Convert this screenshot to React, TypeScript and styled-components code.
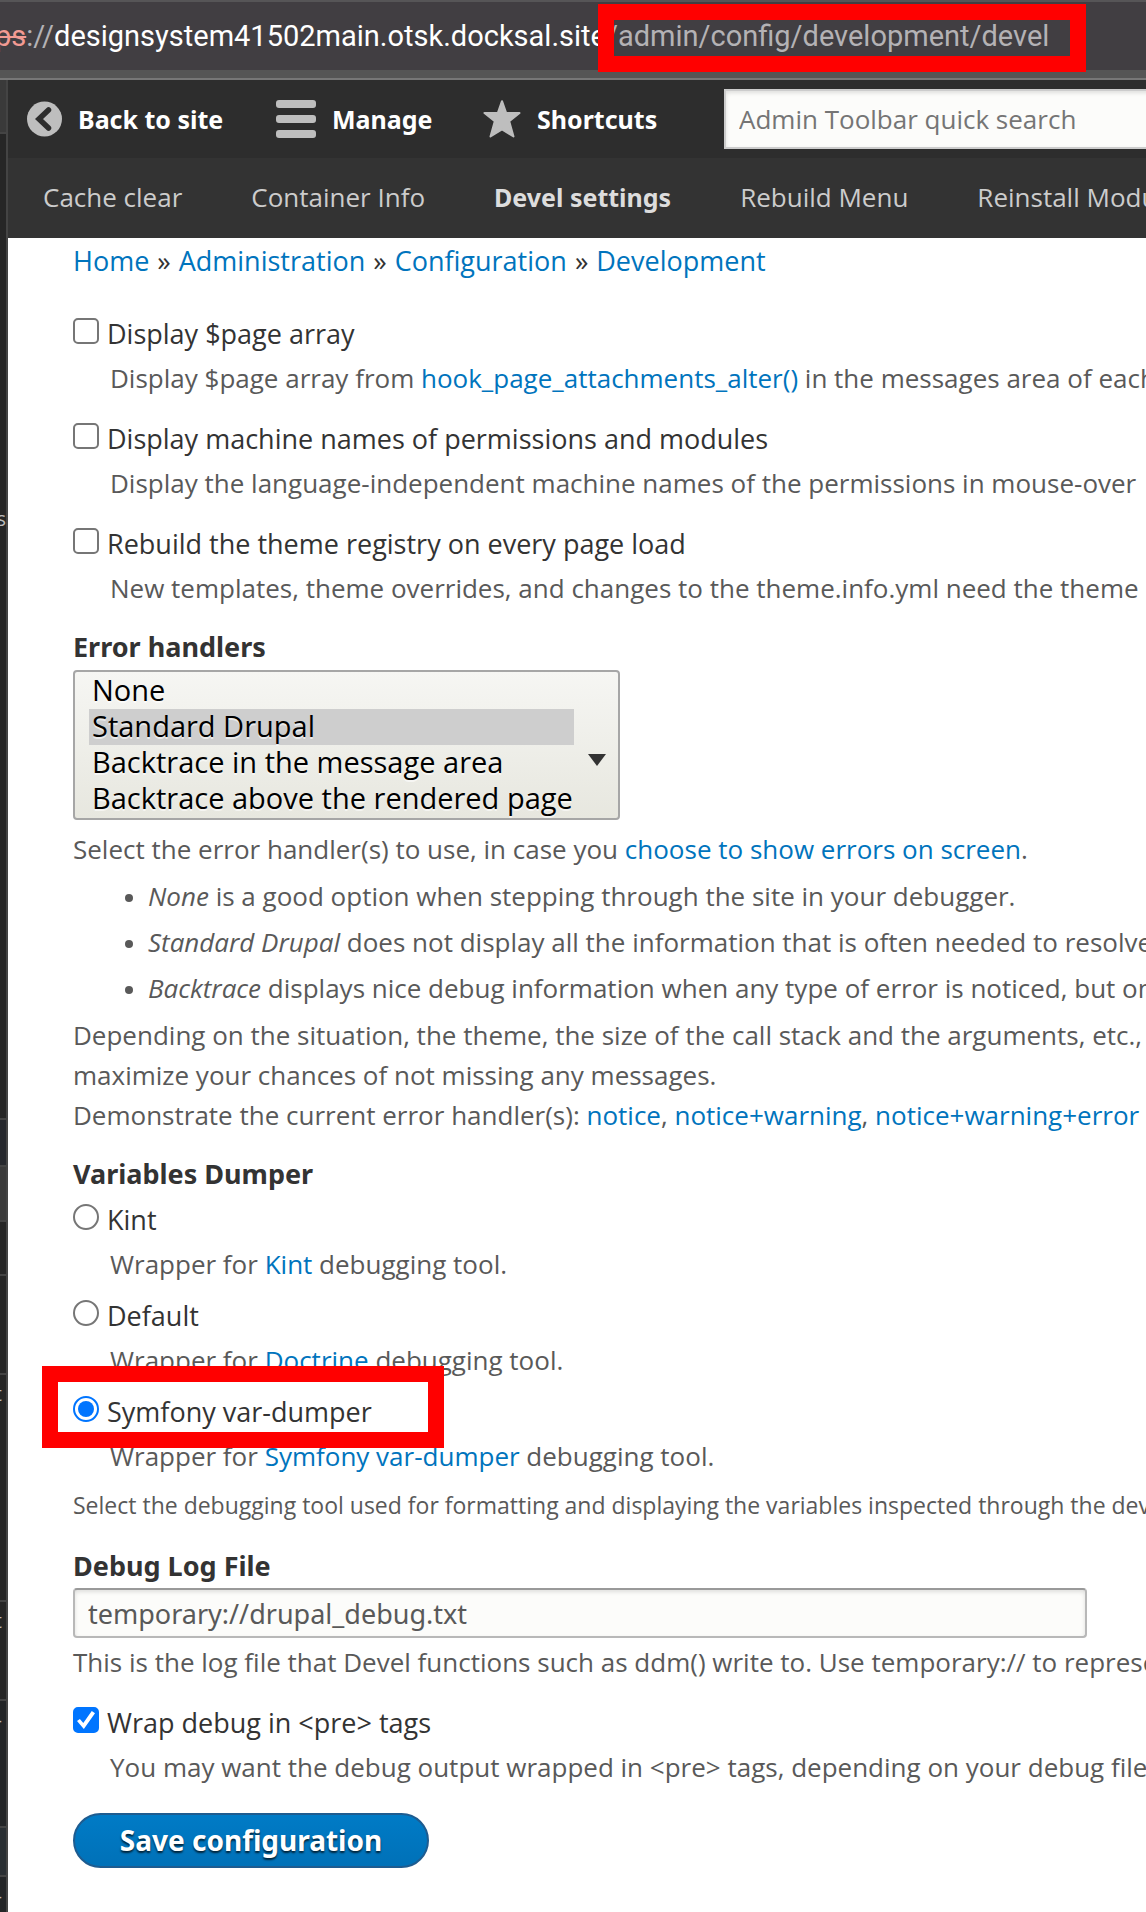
import React from "react";
import styled, { createGlobalStyle } from "styled-components";

const GlobalStyle = createGlobalStyle`
  *, *::before, *::after { box-sizing: border-box; }
  body {
    margin: 0;
    background: #fff;
    color: #333;
    font: 27px/40px "Open Sans", "Noto Sans", sans-serif;
    overflow-x: hidden;
  }
`;

const Page = styled.div`
  min-height: 100vh;
  display: flex;
  flex-direction: column;
  overflow: hidden;
`;

/* Browser address bar */
const AddressBar = styled.header`
  height: 80px;
  background: #413e42;
  border-top: 2px solid #565557;
  border-bottom: 2px solid #777;
  box-shadow: inset 0 -8px #555;
  padding: 15px 0 0;
  overflow: hidden;
`;

const Url = styled.div`
  margin-left: -5px;
  font: 29px/38px Roboto, "Liberation Sans", sans-serif;
  color: #b4b2b5;
  white-space: nowrap;
`;

const Scheme = styled.s`
  color: #f29a93;
`;

const Host = styled.span`
  color: #fff;
`;

const Path = styled.span`
  position: relative;
`;

const Highlight = styled.span<{ $x: number; $y: number; $w: number; $h: number }>`
  position: absolute;
  left: ${(p) => p.$x}px;
  top: ${(p) => p.$y}px;
  width: ${(p) => p.$w}px;
  height: ${(p) => p.$h}px;
  border: 16px solid #f00;
  pointer-events: none;
`;

const Body = styled.div`
  flex: 1;
  display: flex;
  min-width: 0;
`;

/* Edge of the neighbouring window */
const Edge = styled.aside`
  flex: 0 0 8px;
  border-right: 2px solid #444;
  background: #262626;
  overflow: hidden;
`;

const EdgeCell = styled.div<{ $h: number; $bg?: string }>`
  height: ${(p) => p.$h}px;
  background: ${(p) => p.$bg ?? "#262626"};
  border-bottom: 2px solid #444;
  color: #bbb;
  font-size: 20px;
  line-height: 38px;
  overflow: hidden;
  display: flex;
  justify-content: flex-end;
`;

const EdgeMark = styled.span<{ $top?: number }>`
  padding-top: ${(p) => p.$top ?? 0}px;
  padding-right: ${(p) => (p.$top ? 0 : 4)}px;
`;

const Main = styled.main`
  flex: 1;
  min-width: 0;
  overflow: hidden;
`;

/* Admin toolbar */
const Toolbar = styled.nav`
  height: 78px;
  background: #2d2d2d;
  display: flex;
  align-items: center;
  overflow: hidden;
`;

const Tab = styled.a<{ $w: number }>`
  flex: 0 0 ${(p) => p.$w}px;
  display: flex;
  align-items: center;
  gap: 16px;
  padding-left: 19px;
  color: #fff;
  font: 700 25px/40px "Noto Sans", sans-serif;
  text-decoration: none;
  white-space: nowrap;

  svg { flex: none; fill: #bebebe; }
`;

const Search = styled.input`
  flex: 1 0 460px;
  height: 60px;
  border: 2px solid #ccc;
  border-radius: 0;
  padding: 0 13px;
  background: #fcfcfa;
  box-shadow: inset 0 2px 4px rgba(0, 0, 0, 0.12);
  color: #333;
  font: 26px "Open Sans", sans-serif;
  &::placeholder { color: #757575; opacity: 1; }
`;

const Tray = styled.nav`
  height: 80px;
  background: #333;
  display: flex;
  align-items: center;
  gap: 69px;
  padding: 0 0 2px 35px;
  overflow: hidden;
`;

const TrayLink = styled.a<{ $active?: boolean }>`
  flex: none;
  color: ${(p) => (p.$active ? "#ddd" : "#ccc")};
  font-family: ${(p) => (p.$active ? '"Noto Sans"' : '"Open Sans"')}, sans-serif;
  font-size: ${(p) => (p.$active ? 25 : 26)}px;
  font-weight: ${(p) => (p.$active ? 700 : 400)};
  text-decoration: none;
  white-space: nowrap;
`;

/* Page content */
const Content = styled.div`
  padding: 0 0 40px 65px;
`;

const Breadcrumb = styled.nav`
  display: flex;
  gap: 8px;
  line-height: 46px;
  white-space: nowrap;
`;

const Link = styled.a`
  color: #0074bd;
  text-decoration: none;
`;

const Form = styled.form`
  margin-top: 30px;
`;

const Group = styled.div<{ $gap: number; $top?: number }>`
  display: flex;
  flex-direction: column;
  gap: ${(p) => p.$gap}px;
  margin-top: ${(p) => p.$top ?? 0}px;
`;

const Choice = styled.div`
  position: relative;
  display: flex;
  gap: 8px;
  white-space: nowrap;
`;

const Box = styled.input`
  appearance: none;
  flex: none;
  width: 26px;
  height: 26px;
  margin: 4px 0 0;
  border: 2px solid #767676;
  border-radius: ${(p) => (p.type === "radio" ? "50%" : "5px")};
  background: #fff;
  display: grid;
  place-items: center;

  &[type="radio"]:checked { border-color: #0075ff; }
  &[type="radio"]:checked::before {
    content: "";
    width: 16px;
    height: 16px;
    border-radius: 50%;
    background: #0075ff;
  }
  &[type="checkbox"]:checked { border-color: #0075ff; background: #0075ff; }
  &[type="checkbox"]:checked::before {
    content: "";
    width: 18px;
    height: 18px;
    background: #fff;
    clip-path: polygon(0 56%, 16% 44%, 35% 66%, 82% 0, 100% 12%, 38% 100%);
  }
`;

const Description = styled.div<{ $indent?: boolean; $top?: number; $small?: boolean }>`
  margin-top: ${(p) => p.$top ?? 4}px;
  padding-left: ${(p) => (p.$indent ? 37 : 0)}px;
  color: #595959;
  font-size: ${(p) => (p.$small ? 23 : 26)}px;
  white-space: nowrap;
`;

const Title = styled.label<{ $top?: number }>`
  display: block;
  margin-top: ${(p) => p.$top ?? 0}px;
  font: 700 27px/40px "Noto Sans", sans-serif;
`;

const SelectWrap = styled.div`
  position: relative;
  width: fit-content;
  margin-top: 3px;

  &::after {
    content: "";
    position: absolute;
    right: 14px;
    top: 84px;
    border: solid transparent;
    border-width: 12px 9px 0;
    border-top-color: #333;
  }
`;

const Select = styled.select`
  appearance: none;
  display: block;
  width: 547px;
  height: 150px;
  margin: 0;
  padding: 1px 44px 1px 14px;
  border: 2px solid #a6a6a6;
  border-radius: 4px;
  background: linear-gradient(#f6f6f3, #e7e7df);
  font: 29px "Open Sans", sans-serif;
  color: #000;
  text-shadow: 0 2px rgba(255, 255, 255, 0.6);
  overflow: hidden;
  outline: 0;

  option {
    display: flex;
    align-items: center;
    height: 36px;
    min-height: 36px;
    padding: 0 3px 4px;
    color: #000;
  }
  option:checked { background: #cecece; }
`;

const List = styled.ul`
  margin: 7px 0;
  padding: 0 0 0 75px;
  display: flex;
  flex-direction: column;
  gap: 6px;

  li::marker { font-size: 22px; }
`;

const TextField = styled.input`
  display: block;
  width: 100%;
  max-width: 1014px;
  height: 50px;
  margin-top: 2px;
  padding: 0 13px;
  border: 2px solid #b8b8b8;
  border-top-color: #999;
  border-radius: 4px;
  background: #fcfcfa;
  box-shadow: inset 0 2px 4px rgba(0, 0, 0, 0.12);
  color: #595959;
  font: 27px "Noto Sans", sans-serif;
`;

const Save = styled.button`
  display: block;
  min-width: 356px;
  height: 55px;
  margin-top: 26px;
  padding: 0 43px 2px;
  border: 2px solid #1e5c90;
  border-radius: 28px;
  background: linear-gradient(#007bc6, #0071b8);
  color: #fff;
  font: 700 28px "Noto Sans", sans-serif;
  text-shadow: 0 2px 2px rgba(0, 0, 0, 0.7);
  white-space: nowrap;
`;

const BackIcon = () => (
  <svg width="35" height="36" viewBox="0 0 35 36" aria-hidden="true">
    <circle cx="17.5" cy="18" r="17.5" />
    <path d="M21.5 9 12 18l9.500 9" fill="none" stroke="#2d2d2d" strokeWidth="5.500" strokeLinecap="round" strokeLinejoin="miter" />
  </svg>
);

const MenuIcon = () => (
  <svg width="40" height="38" viewBox="0 0 40 38" aria-hidden="true">
    <rect width="40" height="8" rx="3" />
    <rect y="15" width="40" height="8" rx="3" />
    <rect y="30" width="40" height="8" rx="3" />
  </svg>
);

const StarIcon = () => (
  <svg width="38" height="38" viewBox="0 0 38 38" aria-hidden="true">
    <path
      d="M19 1.200 23.200 13H36.500L26.200 21.300 30.500 36.500 19 29.500 7.500 36.500 11.800 21.300 1.500 13H14.800Z"
      stroke="#bebebe"
      strokeWidth="2"
      strokeLinejoin="round"
    />
  </svg>
);

type ChoiceFieldProps = {
  id: string;
  type: "checkbox" | "radio";
  label: string;
  checked?: boolean;
  marked?: boolean;
  children: React.ReactNode;
};

const ChoiceField = ({ id, type, label, checked, marked, children }: ChoiceFieldProps) => (
  <div>
    <Choice>
      <Box id={id} type={type} name={type === "radio" ? "dumper" : id} defaultChecked={checked} />
      <label htmlFor={id}>{label}</label>
      {marked && <Highlight $x={-31} $y={-26} $w={402} $h={82} />}
    </Choice>
    <Description $indent>{children}</Description>
  </div>
);

export default function App() {
  return (
    <Page>
      <GlobalStyle />
      <AddressBar>
        <Url>
          <Scheme>ps</Scheme>://<Host>designsystem41502main.otsk.docksal.site</Host>
          <Path>
            /admin/config/development/devel
            <Highlight $x={-8} $y={-15} $w={488} $h={68} />
          </Path>
        </Url>
      </AddressBar>
      <Body>
        <Edge>
          <EdgeCell $h={54} $bg="#3a3a3a" />
          <EdgeCell $h={986}><EdgeMark $top={366}>s</EdgeMark></EdgeCell>
          <EdgeCell $h={47} $bg="#26282d" />
          <EdgeCell $h={55} $bg="#3a3a3a" />
          <EdgeCell $h={54} />
          <EdgeCell $h={99} />
          <EdgeCell $h={227}><EdgeMark>t</EdgeMark></EdgeCell>
          <EdgeCell $h={99}><EdgeMark>t</EdgeMark></EdgeCell>
          <EdgeCell $h={127} $bg="#232527"><EdgeMark>-</EdgeMark></EdgeCell>
          <EdgeCell $h={49} $bg="#2a2f33" />
          <EdgeCell $h={40} $bg="#232527"><EdgeMark>-</EdgeMark></EdgeCell>
        </Edge>
        <Main>
          <Toolbar>
            <Tab href="#" $w={249}><BackIcon />Back to site</Tab>
            <Tab href="#" $w={207}><MenuIcon />Manage</Tab>
            <Tab href="#" $w={260}><StarIcon />Shortcuts</Tab>
            <Search type="search" placeholder="Admin Toolbar quick search" aria-label="Admin Toolbar quick search" />
          </Toolbar>
          <Tray>
            <TrayLink href="#">Cache clear</TrayLink>
            <TrayLink href="#">Container Info</TrayLink>
            <TrayLink href="#" $active>Devel settings</TrayLink>
            <TrayLink href="#">Rebuild Menu</TrayLink>
            <TrayLink href="#">Reinstall Modules</TrayLink>
          </Tray>
          <Content>
            <Breadcrumb>
              <Link href="#">Home</Link>»<Link href="#">Administration</Link>»
              <Link href="#">Configuration</Link>»<Link href="#">Development</Link>
            </Breadcrumb>
            <Form onSubmit={(e) => e.preventDefault()}>
              <Group $gap={21}>
                <ChoiceField id="page" type="checkbox" label="Display $page array">
                  Display $page array from <Link href="#">hook_page_attachments_alter()</Link> in the messages area of each
                </ChoiceField>
                <ChoiceField id="machine" type="checkbox" label="Display machine names of permissions and modules">
                  Display the language-independent machine names of the permissions in mouse-over
                </ChoiceField>
                <ChoiceField id="rebuild" type="checkbox" label="Rebuild the theme registry on every page load">
                  New templates, theme overrides, and changes to the theme.info.yml need the theme registry
                </ChoiceField>
              </Group>

              <Title htmlFor="handlers" $top={19}>Error handlers</Title>
              <SelectWrap>
                <Select id="handlers" multiple size={4} defaultValue={["standard"]}>
                  <option value="none">None</option>
                  <option value="standard">Standard Drupal</option>
                  <option value="message">Backtrace in the message area</option>
                  <option value="above">Backtrace above the rendered page</option>
                </Select>
              </SelectWrap>
              <Description $top={9}>
                Select the error handler(s) to use, in case you <Link href="#">choose to show errors on screen</Link>.
                <List>
                  <li><em>None</em> is a good option when stepping through the site in your debugger.</li>
                  <li><em>Standard Drupal</em> does not display all the information that is often needed to resolve</li>
                  <li><em>Backtrace</em> displays nice debug information when any type of error is noticed, but only</li>
                </List>
                Depending on the situation, the theme, the size of the call stack and the arguments, etc.,<br />
                maximize your chances of not missing any messages.<br />
                Demonstrate the current error handler(s): <Link href="#">notice</Link>, <Link href="#">notice+warning</Link>, <Link href="#">notice+warning+error</Link>
              </Description>

              <Title as="div" id="dumper-title" $top={19}>Variables Dumper</Title>
              <Group $gap={12} $top={6} role="radiogroup" aria-labelledby="dumper-title">
                <ChoiceField id="kint" type="radio" label="Kint">
                  Wrapper for <Link href="#">Kint</Link> debugging tool.
                </ChoiceField>
                <ChoiceField id="default" type="radio" label="Default">
                  Wrapper for <Link href="#">Doctrine</Link> debugging tool.
                </ChoiceField>
                <ChoiceField id="symfony" type="radio" label="Symfony var-dumper" checked marked>
                  Wrapper for <Link href="#">Symfony var-dumper</Link> debugging tool.
                </ChoiceField>
              </Group>
              <Description $top={9} $small>
                Select the debugging tool used for formatting and displaying the variables inspected through the devel
              </Description>

              <Title htmlFor="log" $top={21}>Debug Log File</Title>
              <TextField id="log" type="text" defaultValue="temporary://drupal_debug.txt" />
              <Description>
                This is the log file that Devel functions such as ddm() write to. Use temporary:// to represent
              </Description>
              <Group $gap={21} $top={21}>
                <ChoiceField id="wrap" type="checkbox" label="Wrap debug in <pre> tags" checked>
                  You may want the debug output wrapped in &lt;pre&gt; tags, depending on your debug file
                </ChoiceField>
              </Group>
              <Save type="submit">Save configuration</Save>
            </Form>
          </Content>
        </Main>
      </Body>
    </Page>
  );
}
